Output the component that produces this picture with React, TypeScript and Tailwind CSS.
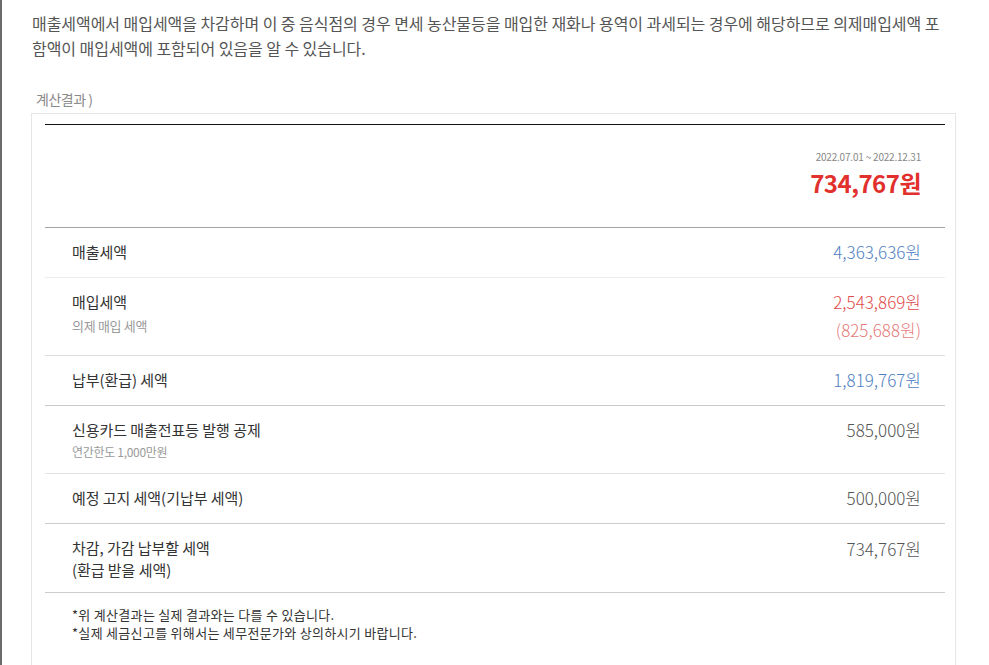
import React from 'react';

type Row = {
  label: string[];
  sub?: string;
  subSize?: string;
  values: { text: string; color: string }[];
  kind: 'single' | 'double' | 'twoline';
  border: string;
};

const BLUE = 'text-[#4f80c2]';
const RED = 'text-[#e04b4b]';
const PINK = 'text-[#e57b7b]';
const GRAY = 'text-[#555555]';

const rows: Row[] = [
  { label: ['매출세액'], values: [{ text: '4,363,636', color: BLUE }], kind: 'single', border: 'border-[#ececec]' },
  {
    label: ['매입세액'],
    sub: '의제 매입 세액',
    subSize: 'text-[13px]',
    values: [
      { text: '2,543,869', color: RED },
      { text: '(825,688원)', color: PINK },
    ],
    kind: 'double',
    border: 'border-[#dedede]',
  },
  { label: ['납부(환급) 세액'], values: [{ text: '1,819,767', color: BLUE }], kind: 'single', border: 'border-[#c9c9c9]' },
  {
    label: ['신용카드 매출전표등 발행 공제'],
    sub: '연간한도 1,000만원',
    subSize: 'text-[12px]',
    values: [{ text: '585,000', color: GRAY }],
    kind: 'double',
    border: 'border-[#e3e3e3]',
  },
  { label: ['예정 고지 세액(기납부 세액)'], values: [{ text: '500,000', color: GRAY }], kind: 'single', border: 'border-[#cccccc]' },
  {
    label: ['차감, 가감 납부할 세액', '(환급 받을 세액)'],
    values: [{ text: '734,767', color: GRAY }],
    kind: 'twoline',
    border: 'border-[#cccccc]',
  },
];

const font = { fontFamily: '"Noto Sans CJK KR", "Noto Sans", sans-serif' };

function ResultRow({ row }: { row: Row }) {
  const pad =
    row.kind === 'single'
      ? 'pt-[12px] pb-[13px]'
      : row.kind === 'double'
      ? 'pt-[12px] pb-[11px]'
      : 'pt-[13px] pb-[11px]';

  return (
    <div className={`flex justify-between pl-[27px] pr-[24px] border-b ${row.border} ${pad}`}>
      <div className="flex flex-col">
        {row.label.map((l) => (
          <span
            key={l}
            className={`text-[15px] tracking-[-0.05px] text-[#333333] ${row.kind === 'twoline' ? 'leading-[22px]' : 'leading-[24px]'}`}
          >
            {l}
          </span>
        ))}
        {row.sub && (
          <span className={`${row.subSize} leading-[20px] tracking-[-0.3px] text-[#9a9a9a] ${row.subSize === 'text-[13px]' ? 'mt-[2px]' : ''}`}>
            {row.sub}
          </span>
        )}
      </div>
      <div className="flex flex-col items-end">
        {row.values.map((v, i) =>
          i === 0 ? (
            <span key={v.text} className={`text-[17px] font-light leading-[24px] tracking-[0px] ${v.color}`}>
              {v.text}원
            </span>
          ) : (
            <span key={v.text} className={`text-[17px] font-light leading-[28px] mt-[2px] tracking-[0px] ${v.color}`}>
              {v.text}
            </span>
          )
        )}
      </div>
    </div>
  );
}

export default function App() {
  return (
    <div className="min-h-[665px] bg-white border-l-2 border-[#6b6b6b] pl-[30px] pt-[11px] overflow-hidden" style={font}>
      <p className="text-[16px] leading-[25px] tracking-[-0.05px] text-[#555555] whitespace-nowrap">
        매출세액에서 매입세액을 차감하며 이 중 음식점의 경우 면세 농산물등을 매입한 재화나 용역이 과세되는 경우에 해당하므로 의제매입세액 포
        <br />
        함액이 매입세액에 포함되어 있음을 알 수 있습니다.
      </p>

      <div className="mt-[29px] pl-[4px] text-[14px] leading-[18px] tracking-[-0.5px] text-[#8a8a8a]">계산결과 )</div>

      <div className="mt-[5px] -ml-[1px] w-[925px] border border-[#e6e6e6] pt-[10px] pl-[13px] pr-[10px] pb-[40px]">
        <div className="border-t border-[#111111]">
          <div className="flex flex-col items-end pr-[24px] pt-[25px] pb-[27px] border-b border-[#a3a3a3]">
            <span className="text-[10px] leading-[14px] tracking-[-0.2px] text-[#888888]">2022.07.01 ~ 2022.12.31</span>
            <span className="text-[24px] font-bold leading-[34px] tracking-[-0.5px] text-[#e2302d] mt-[2px]">734,767원</span>
          </div>

          {rows.map((r) => (
            <ResultRow key={r.label[0]} row={r} />
          ))}

          <div className="pl-[27px] pt-[13px] text-[13px] leading-[18px] tracking-[0.3px] text-[#333333]">
            <p>*위 계산결과는 실제 결과와는 다를 수 있습니다.</p>
            <p>*실제 세금신고를 위해서는 세무전문가와 상의하시기 바랍니다.</p>
          </div>
        </div>
      </div>
    </div>
  );
}
